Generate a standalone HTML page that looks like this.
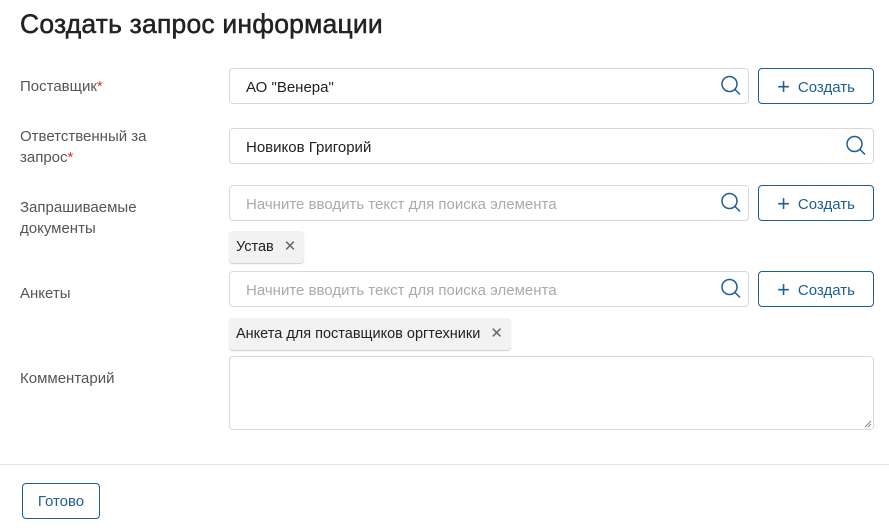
<!DOCTYPE html>
<html><head><meta charset="utf-8"><style>
*{box-sizing:border-box;margin:0;padding:0}
body{width:889px;height:530px;background:#fff;font-family:"Liberation Sans",sans-serif;position:relative;overflow:hidden;color:#222}
.a{position:absolute}
h1{position:absolute;left:20px;top:9px;font-size:26.5px;font-weight:normal;color:#222;letter-spacing:0.2px;-webkit-text-stroke:0.5px #222}
.lbl{position:absolute;left:20px;font-size:15px;color:#555;line-height:21px}
.req{color:#d33}
.inp{position:absolute;left:229px;height:36px;border:1px solid #d9d9d9;border-radius:4px;font-size:15px;line-height:37px;padding-left:16px;color:#222}
.ph{color:#aaa}
.btn{position:absolute;left:758px;width:116px;height:36px;border:1px solid #1d5e93;border-radius:4px;color:#1d5e93;font-size:15px;line-height:36px;text-align:center}
.btn span{font-size:22px;vertical-align:-2px;margin-right:8px;font-weight:300}
.tag{position:absolute;left:229px;height:32px;background:#f2f2f2;border-radius:4px;box-shadow:0 1px 1px #ccc;font-size:14.5px;line-height:32px;padding:0 8px 0 7px;color:#222}
.tag i{font-style:normal;color:#666;margin-left:10px;font-size:15px}
svg.s{position:absolute;width:22px;height:22px}
</style></head><body>
<h1>Создать запрос информации</h1>

<div class="lbl" style="top:76px">Поставщик<span class="req">*</span></div>
<div class="inp" style="top:68px;width:520px">АО "Венера"</div>
<svg class="s" style="left:720px;top:75px" viewBox="0 0 22 22"><circle cx="9.5" cy="9" r="7.5" fill="none" stroke="#1d5e93" stroke-width="1.5"/><path d="M15 14.5l5 5" stroke="#1d5e93" stroke-width="1.5"/></svg>
<div class="btn" style="top:68px"><span>+</span>Создать</div>

<div class="lbl" style="top:126px">Ответственный за<br>запрос<span class="req">*</span></div>
<div class="inp" style="top:128px;width:645px">Новиков Григорий</div>
<svg class="s" style="left:845px;top:135px" viewBox="0 0 22 22"><circle cx="9.5" cy="9" r="7.5" fill="none" stroke="#1d5e93" stroke-width="1.5"/><path d="M15 14.5l5 5" stroke="#1d5e93" stroke-width="1.5"/></svg>

<div class="lbl" style="top:197px">Запрашиваемые<br>документы</div>
<div class="inp ph" style="top:185px;width:520px">Начните вводить текст для поиска элемента</div>
<svg class="s" style="left:720px;top:192px" viewBox="0 0 22 22"><circle cx="9.5" cy="9" r="7.5" fill="none" stroke="#1d5e93" stroke-width="1.5"/><path d="M15 14.5l5 5" stroke="#1d5e93" stroke-width="1.5"/></svg>
<div class="btn" style="top:185px"><span>+</span>Создать</div>
<div class="tag" style="top:231px">Устав<i>✕</i></div>

<div class="lbl" style="top:283px">Анкеты</div>
<div class="inp ph" style="top:271px;width:520px">Начните вводить текст для поиска элемента</div>
<svg class="s" style="left:720px;top:278px" viewBox="0 0 22 22"><circle cx="9.5" cy="9" r="7.5" fill="none" stroke="#1d5e93" stroke-width="1.5"/><path d="M15 14.5l5 5" stroke="#1d5e93" stroke-width="1.5"/></svg>
<div class="btn" style="top:271px"><span>+</span>Создать</div>
<div class="tag" style="top:318px">Анкета для поставщиков оргтехники<i>✕</i></div>

<div class="lbl" style="top:368px">Комментарий</div>
<div class="inp" style="top:356px;width:645px;height:74px"></div>
<svg class="a" style="left:864px;top:420px" width="8" height="8" viewBox="0 0 8 8"><path d="M1 7L7 1M4 7L7 4" stroke="#888" stroke-width="1"/></svg>

<div class="a" style="left:0;top:464px;width:889px;height:1px;background:#e3e3e3"></div>
<div class="a" style="left:22px;top:483px;width:78px;height:36px;border:1px solid #1d5e93;border-radius:4px;font-size:15px;line-height:36px;text-align:center;color:#1d5e93">Готово</div>
</body></html>
